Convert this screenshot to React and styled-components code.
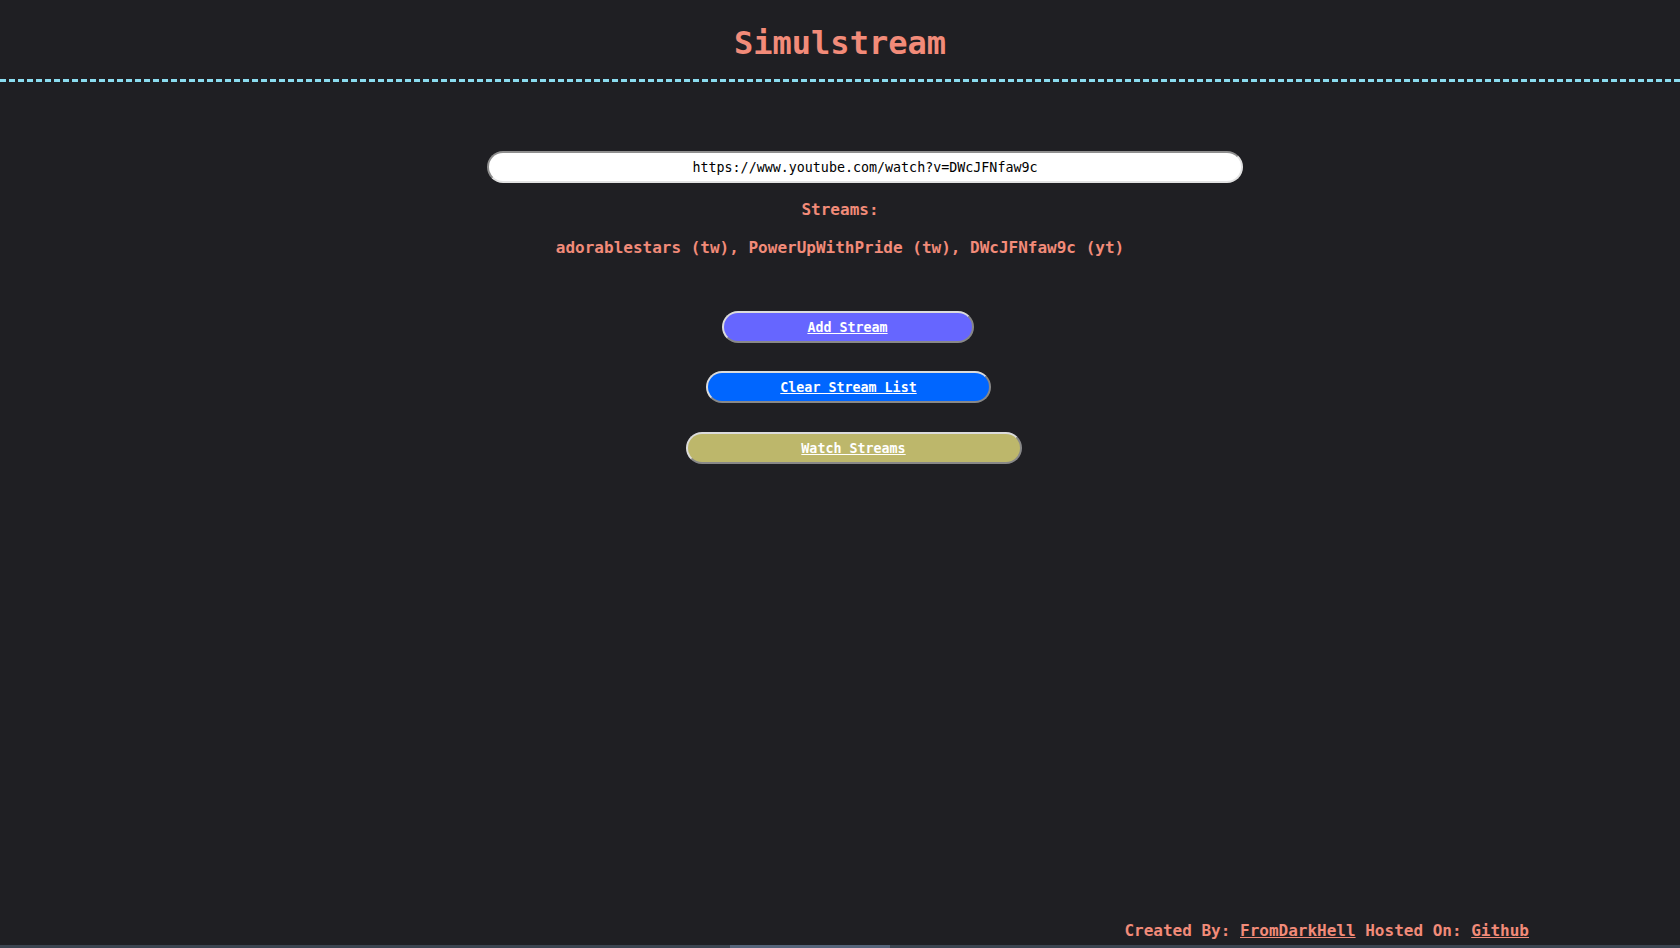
import React from "react";
import styled, { createGlobalStyle } from "styled-components";

const GlobalStyle = createGlobalStyle`
  html, body {
    margin: 0;
    padding: 0;
    background: #1f1f23;
  }
  body {
    font-family: "DejaVu Sans Mono", "Liberation Mono", monospace;
    color: #f28b79;
  }
  * { box-sizing: border-box; }
`;

const Page = styled.div`
  min-height: 100vh;
  display: flex;
  flex-direction: column;
`;

const Header = styled.header`
  padding: 25px 0 17px;
  border-bottom: 3px dashed #8adcef;
  text-align: center;
`;

const Title = styled.h1`
  margin: 0;
  font-size: 32px;
  line-height: 37px;
  font-weight: bold;
  color: #f28b79;
`;

const Main = styled.main`
  display: flex;
  flex-direction: column;
  align-items: center;
  padding-top: 69px;
`;

const UrlInput = styled.input`
  width: 45%;
  height: 32px;
  margin-left: 50px;
  border: 2px inset #e2e2e2;
  border-radius: 16px;
  background: #ffffff;
  color: #000;
  text-align: center;
  font-family: "DejaVu Sans Mono", "Liberation Mono", monospace;
  font-size: 13.33px;
  outline: none;
`;

const Label = styled.p`
  margin: ${(p) => p.$top}px 0 0;
  font-size: 16px;
  line-height: 18.6px;
  font-weight: bold;
  text-align: center;
`;

const ActionButton = styled.button`
  width: ${(p) => p.$width}%;
  height: 32px;
  margin: ${(p) => p.$top}px 0 0 ${(p) => p.$shift}px;
  padding: 1px 0 0;
  border: 2px outset #dcdcdc;
  border-radius: 16px;
  background: ${(p) => p.$bg};
  font-family: "DejaVu Sans Mono", "Liberation Mono", monospace;
  font-size: 13.33px;
  font-weight: bold;
  cursor: pointer;
`;

const ButtonLink = styled.a`
  color: #ffffff;
  text-decoration: underline;
`;

const Footer = styled.footer`
  margin-top: auto;
  padding: 0 151px 4px 0;
  text-align: right;
  font-size: 16px;
  line-height: 18.6px;
  font-weight: bold;
  color: #f28b79;
`;

const FooterLink = styled.a`
  color: #f28b79;
  text-decoration: underline;
`;

const ScrollTrack = styled.div`
  height: 3px;
  background: #3b4450;
  display: flex;
`;

const ScrollThumb = styled.div`
  margin-left: 730px;
  width: 160px;
  background: #55647a;
`;

export default function App() {
  return (
    <Page>
      <GlobalStyle />
      <Header>
        <Title>Simulstream</Title>
      </Header>
      <Main>
        <UrlInput
          type="text"
          defaultValue="https://www.youtube.com/watch?v=DWcJFNfaw9c"
        />
        <Label $top={18}>Streams:</Label>
        <Label $top={19}>
          adorablestars (tw), PowerUpWithPride (tw), DWcJFNfaw9c (yt)
        </Label>
        <ActionButton $width={15} $shift={15} $top={54} $bg="#6666ff">
          <ButtonLink>Add Stream</ButtonLink>
        </ActionButton>
        <ActionButton $width={17} $shift={17} $top={28} $bg="#0066ff">
          <ButtonLink>Clear Stream List</ButtonLink>
        </ActionButton>
        <ActionButton $width={20} $shift={27} $top={29} $bg="#bdb76b">
          <ButtonLink>Watch Streams</ButtonLink>
        </ActionButton>
      </Main>
      <Footer>
        Created By: <FooterLink>FromDarkHell</FooterLink> Hosted On:{" "}
        <FooterLink>Github</FooterLink>
      </Footer>
      <ScrollTrack>
        <ScrollThumb />
      </ScrollTrack>
    </Page>
  );
}
